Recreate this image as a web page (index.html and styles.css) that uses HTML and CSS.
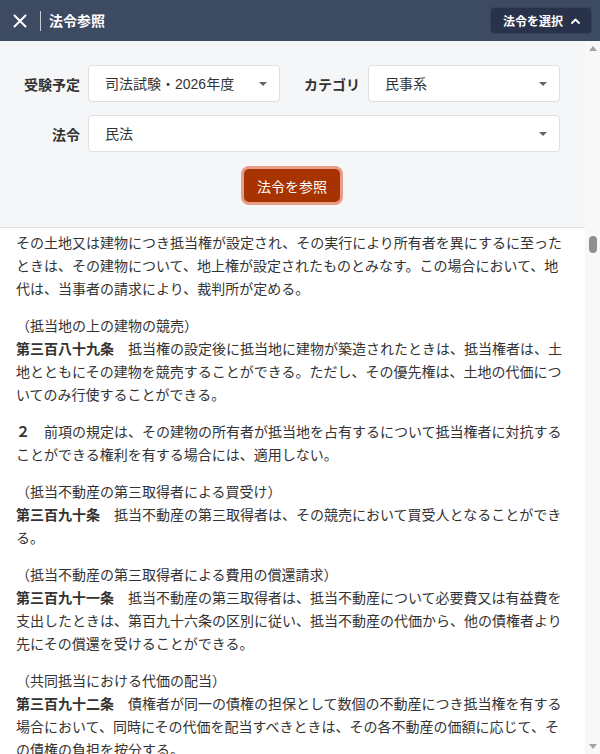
FILE: index.html
```html
<!DOCTYPE html>
<html lang="ja">
<head>
    <meta charset="UTF-8">
    <meta name="viewport" content="width=device-width, initial-scale=1.0">
    <title>法令参照</title>
    <link rel="stylesheet" href="styles.css">
</head>
<body>
    <div class="app">
        <header class="topbar">
            <button type="button" class="close-btn" aria-label="閉じる">
                <svg width="14" height="14" viewBox="0 0 14 14"><path d="M1.5 1.5 L12.5 12.5 M12.5 1.5 L1.5 12.5" stroke="#fff" stroke-width="2" stroke-linecap="round"/></svg>
            </button>
            <span class="divider"></span>
            <h1 class="title">法令参照</h1>
            <button type="button" class="pick-btn">
                法令を選択
                <svg width="9" height="6" viewBox="0 0 9 6"><path d="M1 5 L4.5 1.5 L8 5" stroke="#fff" stroke-width="1.8" fill="none" stroke-linecap="round" stroke-linejoin="round"/></svg>
            </button>
        </header>

        <div class="content">
            <div class="scroller" id="scroller">
                <div class="panel">
                    <div class="filters">
                        <label class="label" for="exam">受験予定</label>
                        <div class="select-wrap">
                            <select id="exam" class="select">
                                <option>司法試験・2026年度</option>
                            </select>
                        </div>
                        <label class="label" for="category">カテゴリ</label>
                        <div class="select-wrap">
                            <select id="category" class="select">
                                <option>民事系</option>
                            </select>
                        </div>
                        <label class="label" for="law">法令</label>
                        <div class="select-wrap wide">
                            <select id="law" class="select">
                                <option>民法</option>
                            </select>
                        </div>
                    </div>
                    <div class="actions">
                        <button type="button" class="primary-btn">法令を参照</button>
                    </div>
                </div>

                <div class="law-text">
                    <div class="article">
                        <p class="caption">（抵当権の消滅請求の効果）</p>
                        <p class="para"><b>第三百八十六条</b>　登記をしたすべての債権者が抵当不動産の第三取得者の提供した代価又は金額を承諾し、かつ、抵当不動産の第三取得者がその承諾を得た代価又は金額を払い渡し又は供託したときは、抵当権は、消滅する。</p>
                    </div>
                    <div class="article">
                        <p class="caption">（抵当権者の同意の登記がある場合の賃貸借の対抗力）</p>
                        <p class="para"><b>第三百八十七条</b>　登記をした賃貸借は、その登記前に登記をした抵当権を有するすべての者が同意をし、かつ、その同意の登記があるときは、その同意をした抵当権者に対抗することができる。</p>
                        <p class="para"><b>２</b>　抵当権者が前項の同意をするには、その抵当権を目的とする権利を有する者その他抵当権者の同意によって不利益を受けるべき者の承諾を得なければならない。</p>
                    </div>
                    <div class="article">
                        <p class="caption">（法定地上権）</p>
                        <p class="para" id="a388"><b>第三百八十八条</b>　土地及びその上に存する建物が同一の所有者に属する場合において、その土地又は建物につき抵当権が設定され、その実行により所有者を異にするに至ったときは、その建物について、地上権が設定されたものとみなす。この場合において、地代は、当事者の請求により、裁判所が定める。</p>
                    </div>
                    <div class="article">
                        <p class="caption">（抵当地の上の建物の競売）</p>
                        <p class="para"><b>第三百八十九条</b>　抵当権の設定後に抵当地に建物が築造されたときは、抵当権者は、土地とともにその建物を競売することができる。ただし、その優先権は、土地の代価についてのみ行使することができる。</p>
                        <p class="para"><b>２</b>　前項の規定は、その建物の所有者が抵当地を占有するについて抵当権者に対抗することができる権利を有する場合には、適用しない。</p>
                    </div>
                    <div class="article">
                        <p class="caption">（抵当不動産の第三取得者による買受け）</p>
                        <p class="para"><b>第三百九十条</b>　抵当不動産の第三取得者は、その競売において買受人となることができる。</p>
                    </div>
                    <div class="article">
                        <p class="caption">（抵当不動産の第三取得者による費用の償還請求）</p>
                        <p class="para"><b>第三百九十一条</b>　抵当不動産の第三取得者は、抵当不動産について必要費又は有益費を支出したときは、第百九十六条の区別に従い、抵当不動産の代価から、他の債権者より先にその償還を受けることができる。</p>
                    </div>
                    <div class="article">
                        <p class="caption">（共同抵当における代価の配当）</p>
                        <p class="para"><b>第三百九十二条</b>　債権者が同一の債権の担保として数個の不動産につき抵当権を有する場合において、同時にその代価を配当すべきときは、その各不動産の価額に応じて、その債権の負担を按分する。</p>
                        <p class="para"><b>２</b>　債権者が同一の債権の担保として数個の不動産につき抵当権を有する場合において、ある不動産の代価のみを配当すべきときは、抵当権者は、その代価から債権の全部の弁済を受けることができる。この場合において、次順位の抵当権者は、その弁済を受ける抵当権者が前項の規定に従い他の不動産の代価から弁済を受けるべき金額を限度として、その抵当権者に代位して抵当権を行使することができる。</p>
                    </div>
                    <div class="article">
                        <p class="caption">（共同抵当における代位の付記登記）</p>
                        <p class="para"><b>第三百九十三条</b>　前条第二項後段の規定により代位によって抵当権を行使する者は、その抵当権の登記にその代位を付記することができる。</p>
                    </div>
                    <div class="article">
                        <p class="caption">（抵当不動産以外の財産からの弁済）</p>
                        <p class="para"><b>第三百九十四条</b>　抵当権者は、抵当不動産の代価から弁済を受けない債権の部分についてのみ、他の財産から弁済を受けることができる。</p>
                        <p class="para"><b>２</b>　前項の規定は、抵当不動産の代価に先立って他の財産の代価を配当すべき場合には、適用しない。この場合において、他の各債権者は、抵当権者に同項の規定による弁済を受けさせるため、抵当権者に配当すべき金額の供託を請求することができる。</p>
                    </div>
                </div>
            </div>

            <div class="scrollbar" aria-hidden="true">
                <span class="sb-arrow up"></span>
                <span class="sb-thumb"></span>
                <span class="sb-arrow down"></span>
            </div>
        </div>
    </div>

    <script>
        // 第三百八十八条の途中から表示する
        const scroller = document.getElementById("scroller");
        const a388 = document.getElementById("a388");
        scroller.scrollTop = a388.offsetTop - 168;
    </script>
</body>
</html>
```

FILE: styles.css
```css
* {
    box-sizing: border-box;
}
html, body {
    margin: 0;
    height: 100%;
}
body {
    font-family: "Liberation Sans", "Noto Sans CJK JP", sans-serif;
    color: #333;
    background: #fff;
}
.app {
    display: flex;
    flex-direction: column;
    height: 100vh;
}
.topbar {
    flex: none;
    height: 41px;
    display: flex;
    align-items: center;
    padding: 0 8px 0 13px;
    background: #3c4a62;
    color: #fff;
}
.close-btn {
    width: 14px;
    height: 14px;
    padding: 0;
    border: 0;
    background: none;
    display: flex;
}
.divider {
    width: 1px;
    height: 20px;
    margin: 0 8px 0 13px;
    background: #c9ced6;
}
.title {
    margin: 0;
    font-size: 14px;
    font-weight: 700;
    line-height: 1;
}
.pick-btn {
    margin-left: auto;
    height: 27px;
    display: flex;
    align-items: center;
    gap: 8px;
    padding: 0 11px 0 12px;
    border: 1px solid #36425a;
    border-radius: 4px;
    background: #28324a;
    color: #fff;
    font-family: inherit;
    font-size: 12px;
    font-weight: 700;
}
.content {
    flex: 1;
    min-height: 0;
    display: flex;
}
.scroller {
    position: relative;
    flex: 1;
    overflow-y: auto;
    scrollbar-width: none;
}
.scrollbar {
    flex: none;
    width: 15px;
    display: flex;
    flex-direction: column;
    align-items: center;
    background: #f8f8f8;
}
.sb-arrow {
    width: 0;
    height: 0;
    border-left: 4.5px solid transparent;
    border-right: 4.5px solid transparent;
}
.sb-arrow.up {
    margin-top: 5px;
    border-bottom: 5px solid #a3a3a3;
}
.sb-arrow.down {
    margin-top: auto;
    margin-bottom: 5px;
    border-top: 5px solid #a3a3a3;
}
.sb-thumb {
    width: 8px;
    height: 17px;
    margin-top: 185px;
    border-radius: 4px;
    background: #8f8f8f;
}
.panel {
    position: sticky;
    top: 0;
    z-index: 1;
    width: 100%;
    padding: 24px 25px 25px 24px;
    background: #f5f6f8;
    border-bottom: 1px solid #dcdfe4;
}
.filters {
    display: grid;
    grid-template-columns: 56px 1fr 72px 1fr;
    column-gap: 8px;
    row-gap: 13px;
    align-items: center;
}
.label {
    text-align: right;
    font-size: 14px;
    font-weight: 700;
    color: #333;
}
.select-wrap {
    position: relative;
}
.select-wrap.wide {
    grid-column: 2 / 5;
}
.select-wrap::after {
    content: "";
    position: absolute;
    right: 13px;
    top: 17px;
    border-left: 4px solid transparent;
    border-right: 4px solid transparent;
    border-top: 4px solid #606266;
}
.select {
    width: 100%;
    height: 37px;
    padding: 0 30px 0 16px;
    border: 1px solid #dcdfe4;
    border-radius: 4px;
    background: #fff;
    color: #333;
    font-family: inherit;
    font-size: 14px;
    appearance: none;
    -webkit-appearance: none;
}
.actions {
    display: flex;
    justify-content: center;
    margin-top: 17px;
}
.primary-btn {
    height: 33px;
    padding: 0 13px;
    border: 0;
    border-radius: 5px;
    background: #a63300;
    color: #fff;
    font-family: inherit;
    font-size: 14px;
    box-shadow: 0 0 0 3px #e79c88;
}
.law-text {
    padding: 12px 16px 24px;
    font-size: 14px;
    line-height: 23px;
}
.caption, .para {
    margin: 0;
}
.para {
    margin-bottom: 14px;
}
```
